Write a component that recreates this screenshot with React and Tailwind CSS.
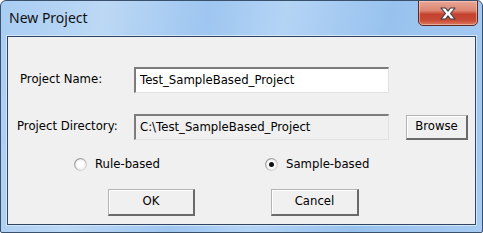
import React from 'react';

const ui = { fontFamily: '"DejaVu Sans", "Liberation Sans", sans-serif' };

const Radio = ({ checked, label }) => (
    <label className="flex items-center gap-[8px] text-[11.7px] text-black" style={ui}>
        <svg width="13" height="13" viewBox="0 0 13 13">
            <defs>
                <linearGradient id={checked ? 'rg1' : 'rg0'} x1="0" y1="0" x2="1" y2="1">
                    <stop offset="0" stopColor="#8c8c8c" />
                    <stop offset="1" stopColor="#e4e4e4" />
                </linearGradient>
            </defs>
            <circle cx="6.5" cy="6.5" r="5.8" fill="#fff" stroke={`url(#${checked ? 'rg1' : 'rg0'})`} strokeWidth="1.3" />
            <circle cx="6.5" cy="6.5" r="4.3" fill="none" stroke="#ececec" strokeWidth="0.8" />
            {checked && <circle cx="6.5" cy="6.5" r="2.5" fill="#111" />}
        </svg>
        {label}
    </label>
);

const Button = ({ children, className }) => (
    <button
        className={`flex items-center justify-center bg-[#f0f0f0] text-[11.7px] text-black border-t border-l border-r-2 border-b-2 border-t-[#b4b4b4] border-l-[#b4b4b4] border-r-[#6a6a6a] border-b-[#6a6a6a] shadow-[inset_1px_1px_0_#ffffff] ${className}`}
        style={ui}
    >
        {children}
    </button>
);

const Field = ({ value, readOnly }) => (
    <div
        className={`flex h-[26px] w-[255px] items-center pl-[4px] text-[11.7px] text-black border-t-2 border-l-2 border-r border-b border-t-[#7c7c7c] border-l-[#7c7c7c] border-r-[#e2e2e2] border-b-[#e2e2e2] ${readOnly ? 'bg-[#f0f0f0]' : 'bg-white'}`}
        style={ui}
    >
        {value}
    </div>
);

export default function App() {
    return (
        <div className="flex h-[233px] w-[483px] flex-col overflow-hidden rounded-t-[6px] rounded-b-[2px] border border-[#3a516e] bg-[linear-gradient(100deg,#a9cdf3_0%,#bcd8f5_20%,#9ec6f0_40%,#b4d4f5_55%,#98c2ee_75%,#a7cbf2_100%)]">
            <div className="flex h-[35px] shrink-0 items-start justify-between">
                <span
                    className="pl-[8px] pt-[8px] text-[14px] leading-[18px] text-[#111]"
                    style={{ fontFamily: '"Noto Sans", "Open Sans", sans-serif' }}
                >
                    New Project
                </span>
                <div className="mr-[4px] mt-[-1px] flex h-[26px] w-[60px] items-center justify-center rounded-b-[5px] border border-[#5a2b26] bg-[linear-gradient(180deg,#e9a796_0%,#dc8571_40%,#c4412f_55%,#c84a35_80%,#dd7b62_100%)] shadow-[inset_0_0_0_1px_rgba(255,220,210,0.5)]">
                    <svg width="18" height="13" viewBox="0 0 18 13">
                        <path
                            d="M2 1 H6.5 L9 4.2 L11.5 1 H16 L11.5 6.5 L16 12 H11.5 L9 8.8 L6.5 12 H2 L6.5 6.5 Z"
                            fill="#ffffff"
                            stroke="#3b3b44"
                            strokeWidth="1.1"
                            strokeLinejoin="round"
                        />
                    </svg>
                </div>
            </div>

            <div className="mx-[6px] flex h-[189px] flex-col border border-[#2d4463] bg-[#f0f0f0] shadow-[0_0_0_1px_#d7e6f6]">
                <div className="mt-[30px] flex items-center pl-[12px]">
                    <span className="w-[114px] text-[11.7px] text-black" style={ui}>Project Name:</span>
                    <Field value="Test_SampleBased_Project" />
                </div>

                <div className="mt-[21px] flex items-center pl-[9px]">
                    <span className="w-[117px] text-[11.7px] text-black" style={ui}>Project Directory:</span>
                    <Field value="C:\Test_SampleBased_Project" readOnly />
                    <Button className="ml-[17px] h-[25px] w-[62px]">Browse</Button>
                </div>

                <div className="mt-[16px] flex items-center pl-[66px]">
                    <div className="w-[191px]">
                        <Radio label="Rule-based" />
                    </div>
                    <Radio checked label="Sample-based" />
                </div>

                <div className="mt-[15px] flex items-center gap-[76px] pl-[100px]">
                    <Button className="h-[27px] w-[87px]">OK</Button>
                    <Button className="h-[27px] w-[88px]">Cancel</Button>
                </div>
            </div>
        </div>
    );
}
